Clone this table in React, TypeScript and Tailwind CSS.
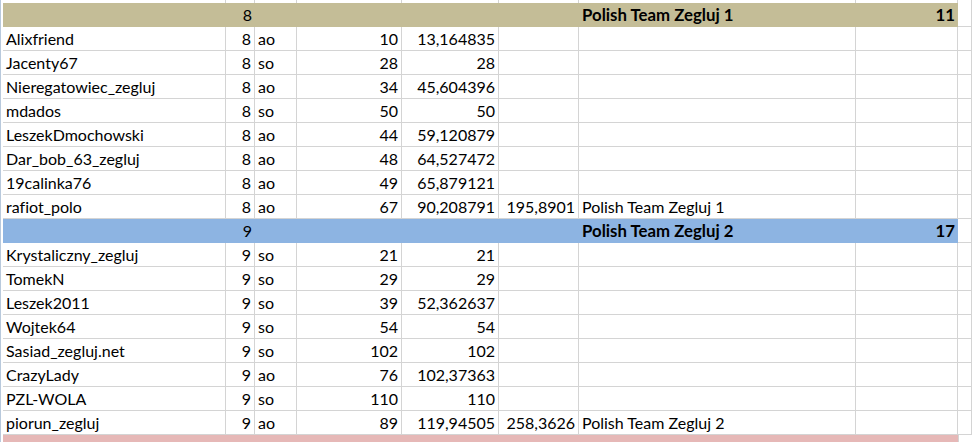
const cols = [223, 29, 42, 105, 97, 80, 277, 102, 14];

type Cell = { v?: string; right?: boolean; bold?: boolean };
type Row = { band?: string; cells: Cell[] };

function player(
  name: string,
  grp: string,
  kind: string,
  pos: string,
  score: string,
  total?: string,
  team?: string
): Row {
  return {
    cells: [
      { v: name },
      { v: grp, right: true },
      { v: kind },
      { v: pos, right: true },
      { v: score, right: true },
      { v: total, right: true },
      { v: team },
      {},
      {},
    ],
  };
}

function header(bg: string, grp: string, team: string, pts: string): Row {
  return {
    band: bg,
    cells: [
      {},
      { v: grp, right: true },
      {},
      {},
      {},
      {},
      { v: team, bold: true },
      { v: pts, right: true, bold: true },
      {},
    ],
  };
}

const rows: Row[] = [
  header("bg-[#c4bd97]", "8", "Polish Team Zegluj 1", "11"),
  player("Alixfriend", "8", "ao", "10", "13,164835"),
  player("Jacenty67", "8", "so", "28", "28"),
  player("Nieregatowiec_zegluj", "8", "ao", "34", "45,604396"),
  player("mdados", "8", "so", "50", "50"),
  player("LeszekDmochowski", "8", "ao", "44", "59,120879"),
  player("Dar_bob_63_zegluj", "8", "ao", "48", "64,527472"),
  player("19calinka76", "8", "ao", "49", "65,879121"),
  player("rafiot_polo", "8", "ao", "67", "90,208791", "195,8901", "Polish Team Zegluj 1"),
  header("bg-[#8db4e2]", "9", "Polish Team Zegluj 2", "17"),
  player("Krystaliczny_zegluj", "9", "so", "21", "21"),
  player("TomekN", "9", "so", "29", "29"),
  player("Leszek2011", "9", "so", "39", "52,362637"),
  player("Wojtek64", "9", "so", "54", "54"),
  player("Sasiad_zegluj.net", "9", "so", "102", "102"),
  player("CrazyLady", "9", "ao", "76", "102,37363"),
  player("PZL-WOLA", "9", "so", "110", "110"),
  player("piorun_zegluj", "9", "ao", "89", "119,94505", "258,3626", "Polish Team Zegluj 2"),
];

function SheetRow({ row }: { row: Row }) {
  return (
    <div className="flex h-[24px]">
      <div className="w-[3px] shrink-0 border-l border-[#b8c9dc]" />
      {row.cells.map((c, i) => {
        const inBand = row.band && i < 8;
        return (
          <div
            key={i}
            style={{ width: cols[i] }}
            className={`shrink-0 overflow-visible whitespace-nowrap px-[3px] pt-[1px] leading-[22px] ${
              inBand ? row.band : "border-r border-b border-[#d4d4d4]"
            } ${c.right ? "text-right" : "text-left"} ${c.bold ? "font-bold text-[16.8px]" : ""}`}
          >
            {c.v}
          </div>
        );
      })}
    </div>
  );
}

export default function App() {
  return (
    <div
      className="w-[972px] h-[442px] overflow-hidden bg-white text-[16px] text-black [font-variant-ligatures:none]"
      style={{ fontFamily: "Lato, 'Noto Sans', sans-serif" }}
    >
      <div className="flex h-[3px]">
        <div className="w-[3px] shrink-0 border-l border-[#b8c9dc]" />
        {cols.map((w, i) => (
          <div key={i} style={{ width: w }} className="shrink-0 border-r border-[#d4d4d4]" />
        ))}
      </div>
      {rows.map((r, i) => (
        <SheetRow key={i} row={r} />
      ))}
      <div className="flex h-[8px]">
        <div className="w-[3px] shrink-0 border-l border-[#b8c9dc]" />
        <div className="w-[955px] shrink-0 bg-[#e6b8b7]" />
        <div className="w-[14px] shrink-0 border-l border-[#d4d4d4]" />
      </div>
    </div>
  );
}
